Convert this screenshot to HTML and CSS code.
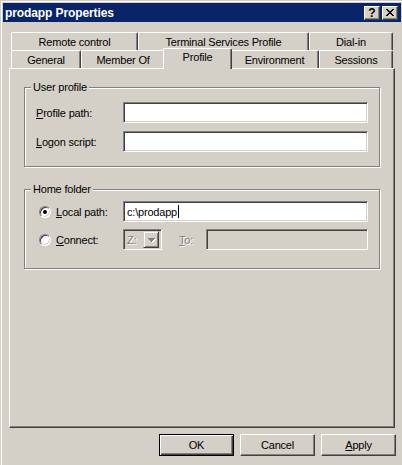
FILE: index.html
```html
<!DOCTYPE html>
<html>
<head>
<meta charset="utf-8">
<title>prodapp Properties</title>
<link rel="stylesheet" href="styles.css">
</head>
<body>
<div class="window">
  <div class="titlebar">
    <span class="title">prodapp Properties</span>
    <div class="caption-buttons">
      <span class="cap-btn help">?</span>
      <span class="cap-btn close">
        <svg width="8" height="7" viewBox="0 0 8 7" shape-rendering="crispEdges"><path fill="#000" d="M0 0h2v1h-2zM6 0h2v1h-2zM1 1h2v1h-2zM5 1h2v1h-2zM2 2h4v1h-4zM3 3h2v1h-2zM2 4h4v1h-4zM1 5h2v1h-2zM5 5h2v1h-2zM0 6h2v1h-2zM6 6h2v1h-2z"/></svg>
      </span>
    </div>
  </div>
  <div class="dialog-body">
    <div class="tabstrip">
      <div class="tabrow">
        <div class="tab w-remote">Remote control</div>
        <div class="tab w-tsp">Terminal Services Profile</div>
        <div class="tab w-dialin">Dial-in</div>
      </div>
      <div class="tabrow">
        <div class="tab w-general">General</div>
        <div class="tab w-member">Member Of</div>
        <div class="tab active w-profile">Profile</div>
        <div class="tab w-env">Environment</div>
        <div class="tab w-sessions">Sessions</div>
      </div>
    </div>
    <div class="panel">
      <fieldset class="group group-user">
        <legend><span>User profile</span></legend>
        <div class="field-row">
          <span class="label"><u>P</u>rofile path:</span>
          <span class="textbox wide"></span>
        </div>
        <div class="field-row">
          <span class="label"><u>L</u>ogon script:</span>
          <span class="textbox wide"></span>
        </div>
      </fieldset>
      <fieldset class="group group-home">
        <legend><span>Home folder</span></legend>
        <div class="field-row">
          <span class="radio checked"></span>
          <span class="radio-label"><u>L</u>ocal path:</span>
          <span class="textbox wide"><span class="value">c:\prodapp</span><span class="caret"></span></span>
        </div>
        <div class="field-row">
          <span class="radio"></span>
          <span class="radio-label"><u>C</u>onnect:</span>
          <span class="combo">
            <span class="combo-text disabled">Z:</span>
            <span class="combo-btn">
              <svg width="8" height="5" viewBox="0 0 8 5" shape-rendering="crispEdges"><path fill="#fff" d="M1 1h7v1h-1v1h-1v1h-1v1h-1v-1h-1v-1h-1v-1h-1z"/><path fill="#808080" d="M0 0h7v1h-1v1h-1v1h-1v1h-1v-1h-1v-1h-1v-1h-1z"/></svg>
            </span>
          </span>
          <span class="to-label disabled"><u>T</u>o:</span>
          <span class="textbox to-box"></span>
        </div>
      </fieldset>
    </div>
    <div class="buttons">
      <span class="btn default">OK</span>
      <span class="btn">Cancel</span>
      <span class="btn"><u>A</u>pply</span>
    </div>
  </div>
</div>
</body>
</html>
```

FILE: styles.css
```css
* { box-sizing: border-box; }

html, body {
  margin: 0;
  padding: 0;
  background: #d4d0c8;
}

body {
  font-family: "Liberation Sans", Arial, sans-serif;
  font-size: 11px;
  color: #000;
  letter-spacing: -0.2px;
}

.window {
  width: 402px;
  height: 465px;
  background: #d4d0c8;
  border-top: 1px solid #d4d0c8;
  border-left: 1px solid #d4d0c8;
  box-shadow: inset 1px 1px #fff;
  padding: 2px 1px 0 2px;
  display: flex;
  flex-direction: column;
}

.titlebar {
  height: 19px;
  background: #0a246a;
  display: flex;
  align-items: center;
  justify-content: space-between;
  padding: 0 3px 0 2px;
}

.title {
  color: #fff;
  font-weight: bold;
  font-size: 12px;
  letter-spacing: -0.1px;
  line-height: 14px;
}

.caption-buttons {
  display: flex;
  gap: 2px;
}

.cap-btn {
  width: 16px;
  height: 14px;
  background: #d4d0c8;
  border: 1px solid;
  border-color: #fff #404040 #404040 #fff;
  box-shadow: inset -1px -1px #808080;
  display: flex;
  align-items: center;
  justify-content: center;
  font-weight: bold;
  font-size: 12px;
  line-height: 12px;
  letter-spacing: 0;
}

.cap-btn.help { padding-top: 1px; }

.dialog-body {
  flex: 1;
  display: flex;
  flex-direction: column;
  padding: 10px 6px 0 6px;
}

.tabstrip {
  padding-left: 2px;
}

.tabrow {
  display: flex;
}

.tab {
  height: 18px;
  background: #d4d0c8;
  border-top: 1px solid #fff;
  border-left: 1px solid #fff;
  border-right: 1px solid #404040;
  border-radius: 2px 2px 0 0;
  box-shadow: inset -1px 0 #808080;
  display: flex;
  justify-content: center;
  padding-top: 3px;
  line-height: 13px;
  white-space: nowrap;
}

.tab.active {
  position: relative;
  z-index: 1;
  height: 21px;
  margin: -2px -2px -1px -2px;
  padding-top: 2px;
}

.w-remote { width: 127px; }
.w-tsp { width: 171px; }
.w-dialin { width: 84px; }
.w-general { width: 70px; }
.w-member { width: 84px; }
.w-profile { width: 69px; }
.w-env { width: 89px; }
.w-sessions { width: 74px; }

.panel {
  height: 360px;
  border: 1px solid;
  border-color: #fff #404040 #404040 #fff;
  box-shadow: inset -1px -1px #808080;
  padding: 12px 0 0 14px;
}

.group {
  width: 356px;
  margin: 0;
  border: 1px solid #808080;
  box-shadow: inset 1px 1px #fff, 1px 1px #fff;
  min-inline-size: 0;
}

.group legend {
  margin-left: 6px;
  padding: 0 2px;
  line-height: 13px;
  background: #d4d0c8;
}

.group-user {
  padding: 8px 0 14px 0;
}

.group-user .field-row {
  padding-left: 11px;
}

.group-home {
  margin-top: 16px;
  padding: 5px 0 18px 0;
}

.group-home .field-row {
  padding-left: 14px;
}

.field-row {
  display: flex;
  align-items: center;
  height: 21px;
}

.group-user .field-row + .field-row { margin-top: 8px; }
.group-home .field-row + .field-row { margin-top: 7px; }

.label {
  width: 87px;
}

.textbox {
  height: 21px;
  background: #fff;
  border: 1px solid;
  border-color: #808080 #fff #fff #808080;
  box-shadow: inset 1px 1px #404040, inset -1px -1px #d4d0c8;
  display: flex;
  align-items: center;
  padding-left: 3px;
}

.textbox.wide { width: 245px; }

.caret {
  display: inline-block;
  width: 1px;
  height: 13px;
  background: #000;
  margin-left: 1px;
}

.radio {
  position: relative;
  width: 12px;
  height: 12px;
  border-radius: 50%;
  background: #fff;
  border: 1px solid;
  border-color: #808080 #fff #fff #808080;
  box-shadow: inset 1px 1px #404040, inset -1px -1px #d4d0c8;
  flex: none;
}

.radio.checked::after {
  content: "";
  position: absolute;
  left: 3px;
  top: 3px;
  width: 4px;
  height: 4px;
  border-radius: 50%;
  background: #000;
}

.radio-label {
  width: 72px;
  padding-left: 5px;
}

.disabled {
  color: #808080;
  text-shadow: 1px 1px #fff;
}

.combo {
  width: 39px;
  height: 21px;
  border: 1px solid;
  border-color: #808080 #fff #fff #808080;
  box-shadow: inset 1px 1px #404040, inset -1px -1px #d4d0c8;
  display: flex;
  align-items: center;
  justify-content: space-between;
  padding: 2px 2px 2px 3px;
}

.combo-btn {
  width: 16px;
  height: 17px;
  border: 1px solid;
  border-color: #d4d0c8 #404040 #404040 #d4d0c8;
  box-shadow: inset 1px 1px #fff, inset -1px -1px #808080;
  display: flex;
  align-items: center;
  justify-content: center;
  padding: 1px 0 0 1px;
}

.to-label {
  margin-left: 17px;
  width: 27px;
}

.textbox.to-box {
  width: 162px;
  background: #d4d0c8;
}

.buttons {
  display: flex;
  justify-content: flex-end;
  gap: 6px;
  margin-top: 6px;
  margin-right: -1px;
}

.btn {
  width: 75px;
  height: 22px;
  border: 1px solid;
  border-color: #fff #404040 #404040 #fff;
  box-shadow: inset -1px -1px #808080;
  display: flex;
  align-items: center;
  justify-content: center;
  background: #d4d0c8;
}

.btn.default {
  border-color: #000;
  box-shadow: inset 1px 1px #fff, inset -1px -1px #404040, inset -2px -2px #808080;
}
```
